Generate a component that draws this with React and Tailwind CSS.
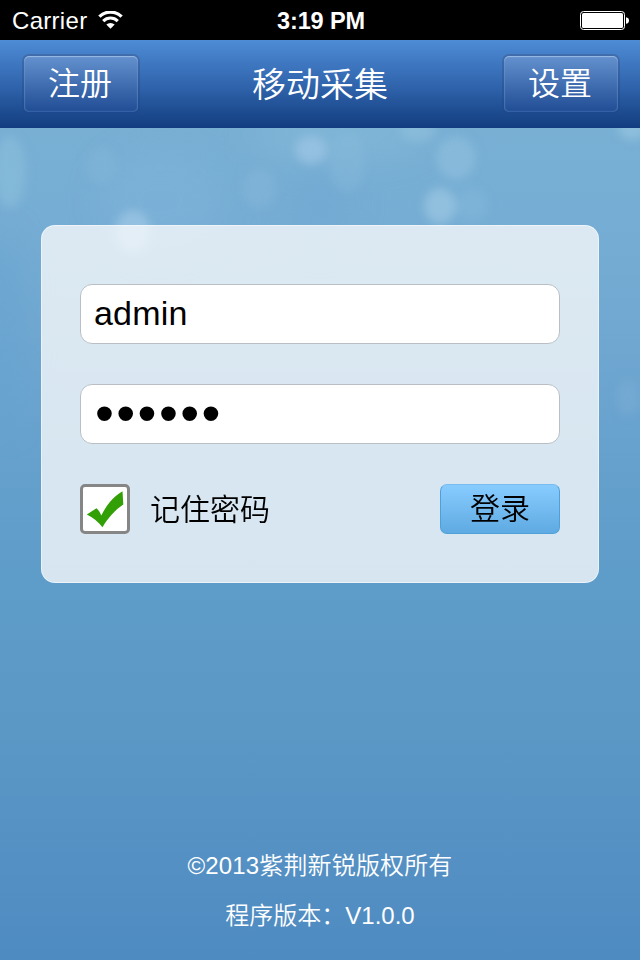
import React, { useState } from 'react';

function WifiIcon() {
  return (
    <svg className="h-[19px] w-[25px]" viewBox="0 0 25 19" fill="none">
      <path d="M1.400 5.700a15.700 15.700 0 0 1 22.200 0" stroke="#fff" strokeWidth="3.300" />
      <path d="M5.200 10.100a10.300 10.300 0 0 1 14.600 0" stroke="#fff" strokeWidth="3" />
      <path d="M12.500 17.800 8.300 13.600a6.100 6.100 0 0 1 8.400 0Z" fill="#fff" />
    </svg>
  );
}

function BatteryIcon() {
  return (
    <svg className="h-[20px] w-[50px]" viewBox="0 0 50 20" fill="none">
      <rect x="0.5" y="1.5" width="44" height="18" rx="3" stroke="#fff" />
      <rect x="2" y="3" width="41" height="15" rx="1.5" fill="#fff" />
      <path d="M46 7.200c2 .3 3 1.600 3 3.300s-1 3-3 3.300Z" fill="#fff" />
    </svg>
  );
}

function CheckIcon() {
  return (
    <svg className="h-[38px] w-[40px]" viewBox="0 0 40 38">
      <path
        d="M1.800 24.500 11.500 18.300C13.500 20 15 22.500 16.300 25.500 21 16 28 6.500 37.500 1.300L38.300 14.500C30 20 23 28 17.500 37.300 13.500 32 8 27.500 1.800 24.500Z"
        fill="#339f06"
      />
    </svg>
  );
}

const spots = [
  { cx: 10, cy: 172, rx: 16, ry: 36, fill: '#8cc0dc', opacity: 0.6 },
  { cx: 311, cy: 150, rx: 16, ry: 14, fill: '#9cc4e4', opacity: 0.75 },
  { cx: 347, cy: 162, rx: 18, ry: 30, fill: '#8abcdc', opacity: 0.4 },
  { cx: 456, cy: 158, rx: 20, ry: 22, fill: '#93c2e0', opacity: 0.55 },
  { cx: 440, cy: 206, rx: 16, ry: 18, fill: '#9cc8e2', opacity: 0.7 },
  { cx: 472, cy: 205, rx: 16, ry: 17, fill: '#88bcdb', opacity: 0.4 },
  { cx: 133, cy: 232, rx: 18, ry: 22, fill: '#a2cae6', opacity: 0.65 },
  { cx: 259, cy: 188, rx: 17, ry: 20, fill: '#8ab8dc', opacity: 0.45 },
  { cx: 101, cy: 165, rx: 16, ry: 18, fill: '#84b8da', opacity: 0.4 },
  { cx: 418, cy: 130, rx: 18, ry: 12, fill: '#96c4e0', opacity: 0.5 },
  { cx: 632, cy: 128, rx: 14, ry: 12, fill: '#9ccae2', opacity: 0.6 },
  { cx: 628, cy: 398, rx: 12, ry: 18, fill: '#80b2da', opacity: 0.4 },
];

// large faint patches behind the bright spots
const haze = [
  { cx: 340, cy: 135, rx: 90, ry: 24, fill: '#8cc0dc', opacity: 0.4 },
  { cx: 160, cy: 200, rx: 60, ry: 50, fill: '#84b8dc', opacity: 0.35 },
  { cx: 320, cy: 205, rx: 30, ry: 40, fill: '#70a8d4', opacity: 0.5 },
  { cx: 0, cy: 330, rx: 22, ry: 100, fill: '#629fd0', opacity: 0.4 },
];

function Wallpaper() {
  return (
    <svg className="absolute inset-0 h-full w-full" viewBox="0 0 640 960">
      <defs>
        <linearGradient id="sky" x1="0" y1="0" x2="0" y2="1">
          <stop offset="0.13" stopColor="#78afd3" />
          <stop offset="0.23" stopColor="#76add4" />
          <stop offset="0.34" stopColor="#70a8d1" />
          <stop offset="0.45" stopColor="#68a2ce" />
          <stop offset="0.6" stopColor="#5e9cc9" />
          <stop offset="0.76" stopColor="#5b98c6" />
          <stop offset="0.9" stopColor="#5490c3" />
          <stop offset="1" stopColor="#4e8bc1" />
        </linearGradient>
        <filter id="soft" x="-50%" y="-50%" width="200%" height="200%" colorInterpolationFilters="sRGB">
          <feGaussianBlur stdDeviation="5" />
        </filter>
        <filter id="softer" x="-50%" y="-50%" width="200%" height="200%" colorInterpolationFilters="sRGB">
          <feGaussianBlur stdDeviation="16" />
        </filter>
      </defs>
      <rect width="640" height="960" fill="url(#sky)" />
      <g filter="url(#softer)">
        {haze.map((patch, i) => (
          <ellipse key={i} {...patch} />
        ))}
      </g>
      <g filter="url(#soft)">
        {spots.map((spot, i) => (
          <ellipse key={i} {...spot} />
        ))}
      </g>
    </svg>
  );
}

function NavButton({ children }) {
  return (
    <button className="h-[60px] w-[118px] rounded-[7px] border-2 border-[#1c458a]/50 bg-gradient-to-b from-[#6794d0] to-[#1d4a92] bg-origin-border pr-[2px] text-[32px] leading-none font-[350] text-white shadow-[inset_0_1px_1px_#9dbce6,inset_0_0_2px_#6f97d0]">
      {children}
    </button>
  );
}

function App() {
  const [name, setName] = useState('admin');
  const [password, setPassword] = useState('123456');
  const [remember, setRemember] = useState(true);

  return (
    <div className="relative flex h-[960px] w-[640px] flex-col overflow-hidden font-['Liberation_Sans','Noto_Sans_CJK_SC',sans-serif]">
      <Wallpaper />

      {/* Status bar */}
      <div className="relative grid h-10 grid-cols-3 items-center bg-black pr-[10px] pl-3 text-white">
        <div className="flex items-center gap-[11px]">
          <span className="pt-px text-[24px] leading-10 tracking-[0.3px]">Carrier</span>
          <WifiIcon />
        </div>
        <span className="pt-px text-center text-[23.5px] leading-10 font-bold tracking-[-0.1px]">3:19 PM</span>
        <div className="flex justify-end pb-[2px]">
          <BatteryIcon />
        </div>
      </div>

      {/* Navigation bar */}
      <header className="relative flex h-[88px] items-center justify-between bg-gradient-to-b from-[#4e8cd6] via-[#3166ae] to-[#133d80] pr-5 pl-[22px]">
        <NavButton>注册</NavButton>
        <h1 className="pt-[2px] pr-[2px] text-[34px] leading-none font-[350] text-white">移动采集</h1>
        <NavButton>设置</NavButton>
      </header>

      {/* Login panel */}
      <form
        className="relative mx-auto mt-[97px] flex h-[358px] w-[558px] flex-col gap-10 rounded-[14px] border border-white/50 bg-[#fdfdfd]/76 px-[38px] pt-[58px]"
        onSubmit={(e) => e.preventDefault()}
      >
        <input
          className="h-[60px] w-[480px] rounded-[12px] border border-[#b9bfc5] bg-white px-[13px] pb-[2px] text-[34px] tracking-[0.2px] text-black outline-none"
          value={name}
          onChange={(e) => setName(e.target.value)}
        />
        <input
          type="password"
          className="h-[60px] w-[480px] rounded-[12px] border border-[#b9bfc5] bg-white px-[14px] pb-[2px] text-[54px] tracking-[2.4px] text-black outline-none"
          value={password}
          onChange={(e) => setPassword(e.target.value)}
        />
        <div className="flex h-[50px] items-center">
          <button
            type="button"
            className="flex size-[50px] items-center justify-center rounded-[5px] border-3 border-[#868686] bg-white"
            onClick={() => setRemember(!remember)}
          >
            {remember && <CheckIcon />}
          </button>
          <span className="ml-5 pt-[2px] text-[30px] leading-none font-[350] text-black">记住密码</span>
          <button className="ml-auto h-[50px] w-[120px] rounded-[7px] border border-[#4f9fd8] border-t-[#78bdf0] bg-gradient-to-b from-[#88ccff] to-[#5eaae2] text-[30px] leading-none font-[350] text-black">
            登录
          </button>
        </div>
      </form>

      {/* Copyright */}
      <footer className="relative mt-auto flex flex-col items-center pb-[19px] text-[24px] font-[350] text-white">
        <p className="leading-[50px] tracking-[0.15px]">©2013紫荆新锐版权所有</p>
        <p className="leading-[50px]">程序版本：V1.0.0</p>
      </footer>
    </div>
  );
}

export default App;
